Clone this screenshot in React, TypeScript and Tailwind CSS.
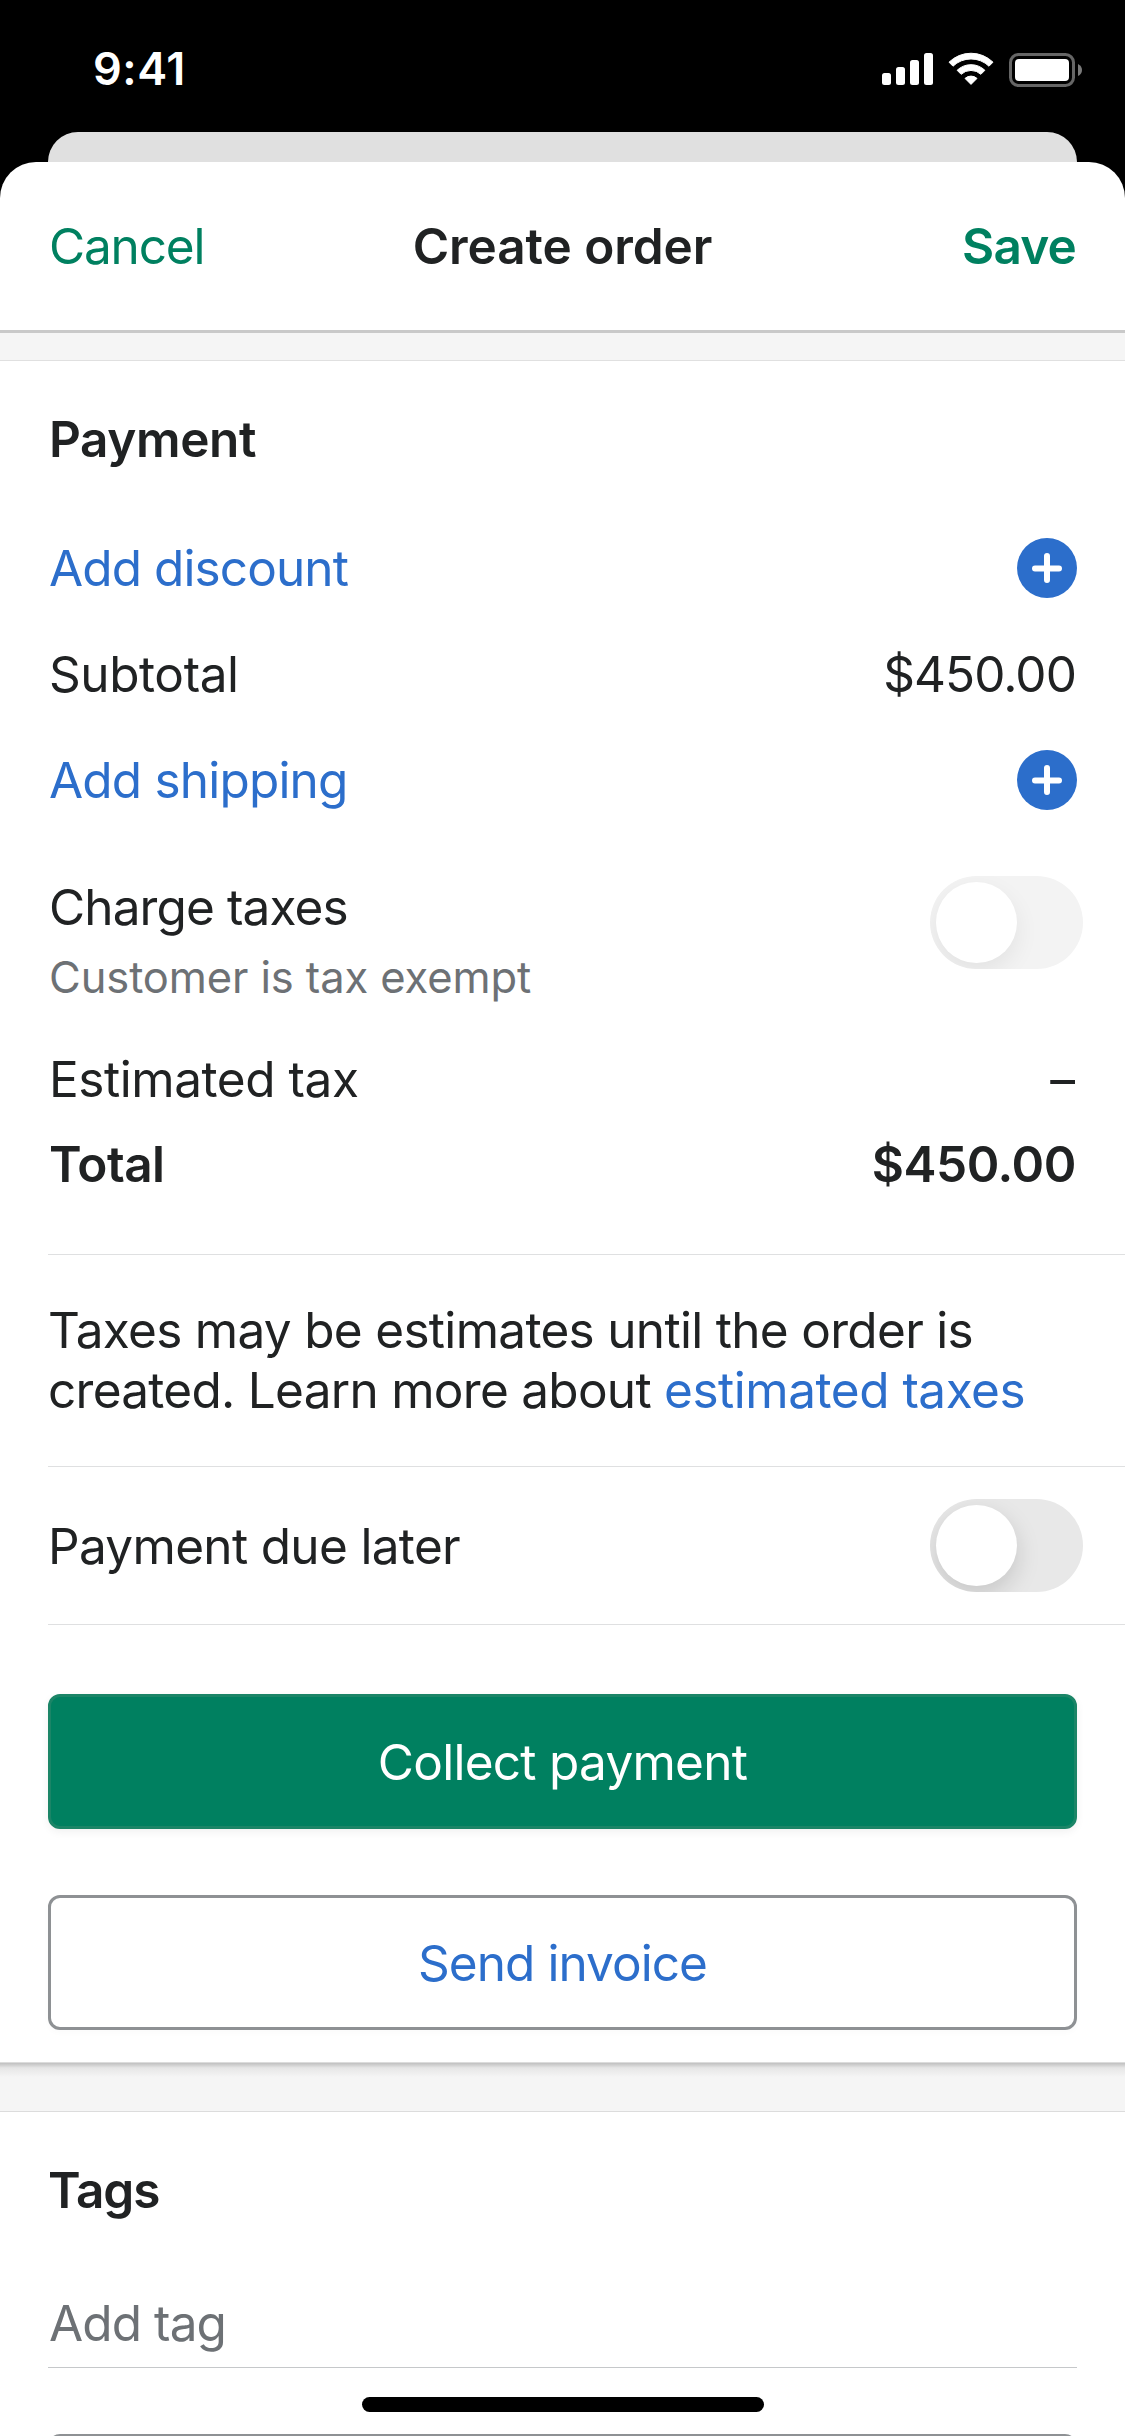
import React from "react";
import clsx from "clsx";

function StatusBar() {
  return (
    <div className="flex h-[132px] shrink-0 items-start justify-between pr-[42px] pl-[93px]">
      <p className="mt-[42px] text-[45px] leading-[54px] font-semibold tracking-[0.5px] text-white">
        9:41
      </p>
      <div className="mt-[50px] flex items-start gap-[15px]">
        <SignalIcon />
        <WifiIcon />
        <BatteryIcon />
      </div>
    </div>
  );
}

function SignalIcon() {
  return (
    <svg width="51" height="38" viewBox="0 0 51 38" fill="#fff">
      <rect x="0" y="23" width="9" height="12" rx="2.5" />
      <rect x="14" y="17" width="9" height="18" rx="2.5" />
      <rect x="28" y="10" width="9" height="25" rx="2.5" />
      <rect x="42" y="3" width="9" height="32" rx="2.5" />
    </svg>
  );
}

function WifiIcon() {
  return (
    <svg width="46" height="38" viewBox="0 0 46 38" fill="#fff" stroke="#fff" strokeWidth="1" strokeLinejoin="round">
      <path d="M1 12.2 A31.5 31.5 0 0 1 45 12.2 L41 16.2 A26 26 0 0 0 5 16.2 Z" />
      <path d="M9.1 20.3 A20 20 0 0 1 36.9 20.3 L32.9 24.3 A14.6 14.6 0 0 0 13.1 24.3 Z" />
      <path d="M17 28.4 A9 9 0 0 1 29 28.4 L23 34.4 Z" />
    </svg>
  );
}

function BatteryIcon() {
  return (
    <svg width="74" height="38" viewBox="0 0 74 38">
      <rect x="1.5" y="4.5" width="63" height="31" rx="8" fill="none" stroke="#666" strokeWidth="3" />
      <rect x="6" y="9" width="54" height="22" rx="4" fill="#fff" />
      <path d="M69 14 Q73 16 73 20 Q73 24 69 26 Z" fill="#7a7a7a" />
    </svg>
  );
}

function PlusButton({ label }: { label: string }) {
  return (
    <button aria-label={label} className="h-[60px] w-[60px]">
      <svg width="60" height="60" viewBox="0 0 60 60">
        <circle cx="30" cy="30" r="30" fill="#2c6ecb" />
        <path d="M30 18v24M18 30.5h24" stroke="#fff" strokeWidth="6" strokeLinecap="round" />
      </svg>
    </button>
  );
}

function Toggle({ disabled }: { disabled?: boolean }) {
  return (
    <button
      role="switch"
      aria-checked={false}
      disabled={disabled}
      className={clsx(
        "h-[93px] w-[153px] shrink-0 overflow-hidden rounded-full p-[6px]",
        disabled ? "bg-[#f3f3f3]" : "bg-[#e8e8e8]"
      )}
    >
      <span
        className={clsx(
          "block h-[81px] w-[81px] rounded-full bg-white",
          disabled
            ? "shadow-[0_9px_24px_rgba(0,0,0,0.07)]"
            : "shadow-[0_9px_24px_rgba(0,0,0,0.15)]"
        )}
      />
    </button>
  );
}

export default function App() {
  return (
    <div className="relative flex h-[2436px] w-[1125px] flex-col overflow-hidden bg-black font-['Inter',sans-serif] text-[49.5px] leading-[60px] text-[#202223]">
      <StatusBar />

      {/* Edge of the screen behind the sheet */}
      <div className="-mb-[40px] ml-[48px] h-[70px] w-[1029px] shrink-0 rounded-t-[30px] bg-[#e0e0e0]" />

      <div className="relative flex min-h-0 flex-1 flex-col overflow-hidden rounded-t-[36px] bg-white">
        <header className="grid h-[171px] shrink-0 grid-cols-[1fr_auto_1fr] items-start border-b-[3px] border-[#c9c9c9] pt-[54px] pr-[49px] pl-[49px]">
          <button className="justify-self-start tracking-[-1.17px] text-[#008060]">Cancel</button>
          <h1 className="font-semibold tracking-[-0.07px]">Create order</h1>
          <button className="justify-self-end font-semibold tracking-[-0.81px] text-[#008060]">Save</button>
        </header>

        <div className="h-[28px] shrink-0 border-b border-[#e0e0e0] bg-[#f5f5f5]" />

        <section className="shrink-0 border-b border-[#dcdcdc] pt-[48px] pb-[32px]">
          <div className="pr-[49px] pl-[49px]">
            <h2 className="font-semibold tracking-[-0.4px]">Payment</h2>
            <div className="-mr-px mt-[69px] flex justify-between">
              <button className="tracking-[-0.9px] text-[#2c6ecb]">Add discount</button>
              <PlusButton label="Add discount" />
            </div>
            <div className="mt-[46px] flex justify-between">
              <p className="tracking-[-0.42px]">Subtotal</p>
              <p className="tracking-[-0.92px]">$450.00</p>
            </div>
            <div className="-mr-px mt-[46px] flex justify-between">
              <button className="tracking-[-0.81px] text-[#2c6ecb]">Add shipping</button>
              <PlusButton label="Add shipping" />
            </div>
            <div className="-mr-[7px] mt-[66px] flex items-start justify-between">
              <div className="pt-px">
                <p className="tracking-[-0.88px]">Charge taxes</p>
                <p className="mt-[13px] text-[43.5px] leading-[54px] tracking-[-0.11px] text-[#6d7175]">
                  Customer is tax exempt
                </p>
              </div>
              <Toggle disabled />
            </div>
            <div className="mt-[45px] flex justify-between">
              <p className="tracking-[-0.44px]">Estimated tax</p>
              <p className="pr-px">–</p>
            </div>
            <div className="mt-[25px] flex justify-between font-semibold">
              <p className="tracking-[-0.5px]">Total</p>
              <p className="tracking-[-0.44px]">$450.00</p>
            </div>
          </div>

          <div className="mt-[60px] ml-[48px] border-t border-[#dfe0e1] pt-[45px] pb-[46px]">
            <p className="tracking-[-0.69px]">Taxes may be estimates until the order is</p>
            <p className="tracking-[-0.72px]">
              created. Learn more about{" "}
              <a className="tracking-[-0.48px] text-[#2c6ecb]">estimated taxes</a>
            </p>
          </div>

          <div className="ml-[48px] flex h-[159px] items-center justify-between border-y border-[#dfe0e1] pr-[42px]">
            <p className="pt-px tracking-[-0.67px]">Payment due later</p>
            <Toggle />
          </div>

          <div className="mt-[69px] flex flex-col gap-[66px] px-[48px]">
            <button className="h-[135px] rounded-[12px] border-[3px] border-[#1b8567] bg-[#008060] tracking-[-0.73px] text-white shadow-[0_3px_9px_rgba(0,0,0,0.06)]">
              Collect payment
            </button>
            <button className="h-[135px] rounded-[12px] border-[3px] border-[#8e9194] bg-white tracking-[-0.95px] text-[#2c6ecb] shadow-[0_3px_6px_rgba(0,0,0,0.02)]">
              Send invoice
            </button>
          </div>
        </section>

        <div className="h-[49px] shrink-0 border-b border-[#dcdcdc] bg-[#f5f5f5]">
          <div className="h-[14px] bg-linear-to-b from-[#c0c0c0] via-[#e6e6e6] via-35% to-[#f5f5f5]" />
        </div>

        <section className="shrink-0 px-[48px] pt-[48px]">
          <h2 className="font-semibold tracking-[-1.1px]">Tags</h2>
          <p className="mt-[73px] border-b border-[#c6c8ca] pb-[14px] pl-px tracking-[-0.9px] text-[#6d7175]">
            Add tag
          </p>
          <div className="mt-[66px] h-[135px] rounded-[12px] border-[3px] border-[#8e9194]" />
        </section>
      </div>

      {/* Home indicator */}
      <div className="absolute bottom-[24px] left-1/2 h-[15px] w-[402px] -translate-x-1/2 rounded-full bg-black" />
    </div>
  );
}
